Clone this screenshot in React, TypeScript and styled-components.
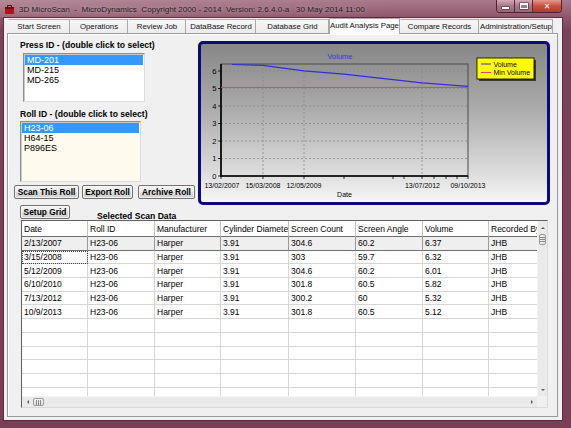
import React from "react";
import styled, { createGlobalStyle } from "styled-components";

const GlobalStyle = createGlobalStyle`
  html, body {
    margin: 0;
    padding: 0;
    width: 571px;
    height: 428px;
    overflow: hidden;
    background: #7c4258;
  }
  * { box-sizing: border-box; }
  body { font-family: "Liberation Sans", Arial, sans-serif; }
`;

const COLS = [66, 67, 66, 68, 67, 67, 66, 67];
const HEADERS = ["Date", "Roll ID", "Manufacturer", "Cylinder Diameter", "Screen Count", "Screen Angle", "Volume", "Recorded By"];
const ROWS = [
  ["2/13/2007", "H23-06", "Harper", "3.91", "304.6", "60.2", "6.37", "JHB"],
  ["3/15/2008", "H23-06", "Harper", "3.91", "303", "59.7", "6.32", "JHB"],
  ["5/12/2009", "H23-06", "Harper", "3.91", "304.6", "60.2", "6.01", "JHB"],
  ["6/10/2010", "H23-06", "Harper", "3.91", "301.8", "60.5", "5.82", "JHB"],
  ["7/13/2012", "H23-06", "Harper", "3.91", "300.2", "60", "5.32", "JHB"],
  ["10/9/2013", "H23-06", "Harper", "3.91", "301.8", "60.5", "5.12", "JHB"],
];
const TABS: [string, number][] = [
  ["Start Screen", 62],
  ["Operations", 58],
  ["Review Job", 58],
  ["DataBase Record", 70],
  ["Database Grid", 73],
  ["Audit Analysis Page", 71],
  ["Compare Records", 79],
  ["Administration/Setup", 74],
];

export default function App() {
  return (
    <>
      <GlobalStyle />
      <Window>
        <TitleBar>
          <AppIcon />
          <TitleText>
            {"3D MicroScan  -  MicroDynamics  Copyright 2000 - 2014  Version: 2.6.4.0-a   30 May 2014 11:00"}
          </TitleText>
          <Controls>
            <CtrlButton $w={17}>
              <MinGlyph />
            </CtrlButton>
            <CtrlButton $w={18}>
              <MaxGlyph />
            </CtrlButton>
            <CtrlButton $w={29} $close>
              ✕
            </CtrlButton>
          </Controls>
        </TitleBar>

        <Client>
          <TabStrip>
            {TABS.map(([name, w]) => (
              <Tab key={name} $w={w} $active={name === "Audit Analysis Page"}>
                {name}
              </Tab>
            ))}
          </TabStrip>

          <TabPage>
            <TopSection>
              <LeftCol>
                <GroupLabel>Press ID - (double click to select)</GroupLabel>
                <ListBox $w={122} $h={49} $ml={9} $mt={2}>
                  <ListItem $sel>MD-201</ListItem>
                  <ListItem>MD-215</ListItem>
                  <ListItem>MD-265</ListItem>
                </ListBox>
                <GroupLabel $mt={7}>Roll ID - (double click to select)</GroupLabel>
                <ListBox $w={121} $h={61} $ml={6} $mt={1} $bg="#fffaee">
                  <ListItem $sel>H23-06</ListItem>
                  <ListItem>H64-15</ListItem>
                  <ListItem>P896ES</ListItem>
                </ListBox>
                <ButtonRow>
                  <Button $w={65}>Scan This Roll</Button>
                  <Button $w={51}>Export Roll</Button>
                  <Button $w={57} $ml={2}>Archive Roll</Button>
                </ButtonRow>
              </LeftCol>

              <ChartPanel>
                <VolumeChart />
              </ChartPanel>
            </TopSection>

            <SetupRow>
              <Button $w={50} $ml={6}>Setup Grid</Button>
              <Caption>Selected Scan Data</Caption>
            </SetupRow>

            <Grid>
              <DataArea>
                <GridRow $h={16}>
                  {HEADERS.map((h) => (
                    <Cell key={h} $head>
                      {h}
                    </Cell>
                  ))}
                </GridRow>
                {ROWS.map((r, i) => (
                  <GridRow key={i} $h={13.7} $sel={i === 0}>
                    {r.map((c, j) => (
                      <Cell key={j} $sel={i === 0} $focus={i === 1 && j === 0}>
                        {c}
                      </Cell>
                    ))}
                  </GridRow>
                ))}
                {Array.from({ length: 6 }).map((_, i) => (
                  <GridRow key={"e" + i} $h={13.7}>
                    {COLS.map((_, j) => (
                      <Cell key={j} />
                    ))}
                  </GridRow>
                ))}
              </DataArea>

              <VScroll>
                <ScrollBtn>
                  <Arrow $dir="up" />
                </ScrollBtn>
                <VThumb>
                  <Grip $vertical />
                </VThumb>
                <Track />
                <ScrollBtn>
                  <Arrow $dir="down" />
                </ScrollBtn>
              </VScroll>

              <HScroll>
                <HScrollBtn>
                  <Arrow $dir="left" />
                </HScrollBtn>
                <HThumb>
                  <Grip />
                </HThumb>
                <Track />
                <HScrollBtn>
                  <Arrow $dir="right" />
                </HScrollBtn>
              </HScroll>
              <Corner />
            </Grid>
          </TabPage>
        </Client>
      </Window>
    </>
  );
}

/* ---------- chart ---------- */

const yOf = (v: number) => 132 - 17.5 * v;

function VolumeChart() {
  const blue = "31,20.5 62,21.4 103,26.8 143,30.1 221,38.9 267,42.4";
  return (
    <svg width="346" height="158" viewBox="0 0 346 158" fontFamily="Liberation Sans, Arial, sans-serif">
      <text x="139" y="15" fill="#3a3ad2" fontSize="7.5" textAnchor="middle">
        Volume
      </text>

      {[1, 2, 3, 4, 5, 6].map((v) => (
        <line key={v} x1="20" x2="267" y1={yOf(v)} y2={yOf(v)} stroke="#8c8c8c" strokeWidth="0.8" strokeDasharray="2 2" />
      ))}
      {[62, 103, 221].map((x) => (
        <line key={x} x1={x} x2={x} y1="20" y2="132" stroke="#8c8c8c" strokeWidth="0.8" strokeDasharray="2 2" />
      ))}

      <rect x="20" y="20" width="247" height="112" fill="none" stroke="#4b4b4b" strokeWidth="1" />
      <line x1="20" x2="20" y1="20" y2="132.5" stroke="#000" strokeWidth="1.6" />
      <line x1="19.5" x2="267" y1="132" y2="132" stroke="#000" strokeWidth="1.6" />

      {[0, 1, 2, 3, 4, 5, 6].map((v) => (
        <g key={v}>
          <line x1="17" x2="20" y1={yOf(v)} y2={yOf(v)} stroke="#000" strokeWidth="0.8" />
          <text x="15.5" y={yOf(v) + 2.6} fontSize="7.5" textAnchor="end" fill="#000">
            {v}
          </text>
        </g>
      ))}

      {[20, 62, 103, 143, 192, 203, 221, 233, 245, 256, 267].map((x) => (
        <line key={x} x1={x} x2={x} y1="132" y2="135" stroke="#000" strokeWidth="0.8" />
      ))}
      {[
        [21, "13/02/2007"],
        [62, "15/03/2008"],
        [103, "12/05/2009"],
        [221.5, "13/07/2012"],
        [267, "09/10/2013"],
      ].map(([x, t]) => (
        <text key={t as string} x={x as number} y="144" fontSize="7" textAnchor="middle" fill="#000">
          {t}
        </text>
      ))}
      <text x="143.5" y="153" fontSize="7" textAnchor="middle" fill="#000">
        Date
      </text>

      <line x1="20" x2="267" y1="43.4" y2="43.4" stroke="#e04848" strokeWidth="1" />
      <polyline points={blue} fill="none" stroke="#2f2fe0" strokeWidth="1.2" />

      <rect x="278" y="16" width="57" height="21" fill="#3a3a3a" />
      <rect x="276" y="14" width="57" height="21" fill="#ffff00" stroke="#000" strokeWidth="0.8" />
      <line x1="280" x2="290" y1="20" y2="20" stroke="#2f2fe0" strokeWidth="1" />
      <text x="292.5" y="22.6" fontSize="7" fill="#000">
        Volume
      </text>
      <line x1="280" x2="290" y1="28.5" y2="28.5" stroke="#e04848" strokeWidth="1" />
      <text x="292.5" y="31.2" fontSize="7" fill="#000">
        Min Volume
      </text>
    </svg>
  );
}

function AppIcon() {
  return (
    <svg width="11" height="11" viewBox="0 0 11 11">
      <rect x="1" y="3" width="9" height="7" rx="1" fill="#b3121d" />
      <rect x="1" y="3" width="9" height="2" fill="#7a0a12" />
      <path d="M3.5 3 V1.5 H7.5 V3" fill="none" stroke="#5a0a10" strokeWidth="1" />
    </svg>
  );
}

/* ---------- window frame ---------- */

const Window = styled.div`
  width: 571px;
  height: 428px;
  display: flex;
  flex-direction: column;
  background: linear-gradient(180deg, #a97a8b 0px, #8e5469 18px, #7c4258 30px, #7a3f56 100%);
`;

const TitleBar = styled.div`
  height: 18px;
  flex: none;
  display: flex;
  align-items: center;
  padding-left: 4px;
  background: linear-gradient(90deg, rgba(255, 255, 255, 0.12), rgba(255, 255, 255, 0) 70%);
`;

const TitleText = styled.div`
  margin-left: 4px;
  font-family: "Liberation Sans", Arial, sans-serif;
  font-size: 8.1px;
  color: #1e1e1e;
  white-space: pre;
  text-shadow: 0 0 4px rgba(255, 230, 240, 0.6);
`;

const Controls = styled.div`
  margin-left: auto;
  margin-right: 9px;
  align-self: flex-start;
  display: flex;
  border: 1px solid #4e2232;
  border-top: none;
  border-radius: 0 0 4px 4px;
  overflow: hidden;
`;

const CtrlButton = styled.div<{ $w: number; $close?: boolean }>`
  width: ${(p) => p.$w}px;
  height: 12px;
  display: flex;
  align-items: center;
  justify-content: center;
  font-family: "DejaVu Sans", sans-serif;
  font-size: 8px;
  font-weight: bold;
  color: #fff;
  border-left: ${(p) => (p.$w === 17 ? "none" : "1px solid #5a2a3c")};
  background: ${(p) =>
    p.$close
      ? "linear-gradient(180deg, #e59a8e 0%, #c9503f 50%, #b43a2c 100%)"
      : "linear-gradient(180deg, #d2aab8 0%, #a97788 50%, #9a6578 100%)"};
`;

const MinGlyph = styled.div`
  width: 7px;
  height: 2px;
  margin-top: 4px;
  background: #fff;
  box-shadow: 0 0 0 0.5px #3c1a28;
`;

const MaxGlyph = styled.div`
  width: 8px;
  height: 6px;
  border: 1px solid #fff;
  border-top-width: 2px;
  box-shadow: 0 0 0 0.5px #3c1a28;
`;

const Client = styled.div`
  flex: 1;
  margin: 0 9px 8px 4px;
  padding: 0 4px 3px 3px;
  background: #f0f0f0;
  display: flex;
  flex-direction: column;
  box-shadow: 0 0 0 1px #5e2a3f;
`;

const TabStrip = styled.div`
  height: 15px;
  flex: none;
  display: flex;
  align-items: flex-end;
  padding-left: 1px;
  position: relative;
  z-index: 1;
`;

const Tab = styled.div<{ $w: number; $active?: boolean }>`
  width: ${(p) => p.$w}px;
  height: ${(p) => (p.$active ? 16 : 14)}px;
  margin-bottom: ${(p) => (p.$active ? -1 : 0)}px;
  display: flex;
  align-items: center;
  justify-content: center;
  font-family: "Liberation Sans", Arial, sans-serif;
  font-size: 7.8px;
  color: #111;
  white-space: nowrap;
  border: 1px solid #a9a9a9;
  border-bottom: none;
  border-left-color: ${(p) => (p.$active ? "#a9a9a9" : "transparent")};
  background: ${(p) => (p.$active ? "#fbfbfb" : "linear-gradient(180deg, #f6f6f6, #ececec)")};
  padding-bottom: ${(p) => (p.$active ? 2 : 0)}px;
`;

const TabPage = styled.div`
  flex: 1;
  display: flex;
  flex-direction: column;
  border: 1px solid #9a9a9a;
  box-shadow: inset 1px 1px 0 #ffffff;
  background: #f0f0f0;
  padding: 6px 7px 8px 6px;
`;

/* ---------- top section ---------- */

const TopSection = styled.div`
  height: 165px;
  flex: none;
  display: flex;
`;

const LeftCol = styled.div`
  width: 184px;
  display: flex;
  flex-direction: column;
`;

const GroupLabel = styled.div<{ $mt?: number }>`
  margin-top: ${(p) => p.$mt ?? 0}px;
  margin-left: 6px;
  height: 11px;
  line-height: 11px;
  font-family: "Liberation Sans", Arial, sans-serif;
  font-weight: bold;
  font-size: 8.6px;
  color: #000;
  white-space: nowrap;
`;

const ListBox = styled.div<{ $w: number; $h: number; $ml: number; $mt: number; $bg?: string }>`
  width: ${(p) => p.$w}px;
  height: ${(p) => p.$h}px;
  margin-left: ${(p) => p.$ml}px;
  margin-top: ${(p) => p.$mt}px;
  background: ${(p) => p.$bg ?? "#ffffff"};
  border: 1px solid #8e8f8f;
  border-right-color: #dcdcdc;
  border-bottom-color: #dcdcdc;
  box-shadow: inset 1px 1px 0 #c8c8c8;
  padding: 1px;
`;

const ListItem = styled.div<{ $sel?: boolean }>`
  height: 10px;
  line-height: 10px;
  padding-left: 2px;
  font-family: "Liberation Sans", Arial, sans-serif;
  font-size: 9px;
  color: ${(p) => (p.$sel ? "#ffffff" : "#000000")};
  background: ${(p) => (p.$sel ? "#3399ff" : "transparent")};
`;

const ButtonRow = styled.div`
  margin-top: 3px;
  display: flex;
  gap: 3px;
`;

const Button = styled.div<{ $w: number; $ml?: number }>`
  width: ${(p) => p.$w}px;
  height: 14px;
  margin-left: ${(p) => p.$ml ?? 0}px;
  flex: none;
  display: flex;
  align-items: center;
  justify-content: center;
  font-family: "Liberation Sans", Arial, sans-serif;
  font-weight: bold;
  font-size: 8.4px;
  color: #000;
  white-space: nowrap;
  border: 1px solid #707070;
  border-radius: 2px;
  background: linear-gradient(180deg, #f2f2f2 0%, #ebebeb 50%, #dddddd 51%, #cfcfcf 100%);
  box-shadow: inset 0 0 0 1px rgba(255, 255, 255, 0.7);
`;

const ChartPanel = styled.div`
  width: 352px;
  height: 164px;
  margin-top: 1px;
  border: 3px solid #0a0a7e;
  border-radius: 5px;
  background: linear-gradient(180deg, #878787 0%, #aaaaaa 40%, #d8d8d8 78%, #f6f6f6 100%);
  box-shadow: inset 0 -1px 0 #ffffff;
  overflow: hidden;

  svg {
    display: block;
  }
`;

/* ---------- grid ---------- */

const SetupRow = styled.div`
  height: 14px;
  flex: none;
  display: flex;
  align-items: flex-end;
`;

const Caption = styled.div`
  margin-left: 27px;
  margin-bottom: -2px;
  line-height: 10px;
  font-family: "Liberation Sans", Arial, sans-serif;
  font-weight: bold;
  font-size: 8.6px;
  color: #000;
`;

const Grid = styled.div`
  width: 527px;
  height: 188px;
  margin: 1px 0 0 7px;
  flex: none;
  display: grid;
  grid-template-columns: 515px 10px;
  grid-template-rows: 175px 11px;
  border: 1px solid;
  border-color: #5f5f5f #dadada #dadada #5f5f5f;
  background: #ffffff;
`;

const DataArea = styled.div`
  overflow: hidden;
  background: #ffffff;
`;

const GridRow = styled.div<{ $h: number; $sel?: boolean }>`
  height: ${(p) => p.$h}px;
  display: grid;
  grid-template-columns: ${COLS.map((c) => c + "px").join(" ")};
  background: ${(p) => (p.$sel ? "#efefef" : "transparent")};
`;

const Cell = styled.div<{ $head?: boolean; $sel?: boolean; $focus?: boolean }>`
  overflow: hidden;
  white-space: nowrap;
  padding: 0 2px;
  display: flex;
  align-items: center;
  font-family: "Liberation Sans", Arial, sans-serif;
  font-size: 8.5px;
  color: #000;
  border-right: 1px solid ${(p) => (p.$head ? "#c4c4c4" : p.$sel ? "#9a9a9a" : "#d6d6d6")};
  border-bottom: 1px solid ${(p) => (p.$head || p.$sel ? "#6f6f6f" : "#d6d6d6")};
  outline: ${(p) => (p.$focus ? "1px dotted #444" : "none")};
  outline-offset: -1px;
`;

const VScroll = styled.div`
  display: flex;
  flex-direction: column;
  background: #eaeaea;
  border-left: 1px solid #f4f4f4;
`;

const HScroll = styled.div`
  display: flex;
  background: #eaeaea;
  border-top: 1px solid #f4f4f4;
`;

const Corner = styled.div`
  background: #f0f0f0;
`;

const ScrollBtn = styled.div`
  height: 13px;
  flex: none;
  display: flex;
  align-items: center;
  justify-content: center;
`;

const HScrollBtn = styled.div`
  width: 11px;
  flex: none;
  display: flex;
  align-items: center;
  justify-content: center;
`;

const Track = styled.div`
  flex: 1;
`;

const VThumb = styled.div`
  height: 11px;
  margin: 0 1px;
  flex: none;
  display: flex;
  align-items: center;
  justify-content: center;
  border: 1px solid #9c9c9c;
  border-radius: 2px;
  background: linear-gradient(90deg, #f6f6f6, #dedede);
`;

const HThumb = styled.div`
  width: 11px;
  margin: 1px 0;
  flex: none;
  display: flex;
  align-items: center;
  justify-content: center;
  border: 1px solid #9c9c9c;
  border-radius: 2px;
  background: linear-gradient(180deg, #f6f6f6, #dedede);
`;

const Grip = styled.div<{ $vertical?: boolean }>`
  width: 5px;
  height: 5px;
  background: ${(p) =>
    p.$vertical
      ? "repeating-linear-gradient(180deg, #8a8a8a 0 1px, transparent 1px 2px)"
      : "repeating-linear-gradient(90deg, #8a8a8a 0 1px, transparent 1px 2px)"};
`;

const Arrow = styled.div<{ $dir: "up" | "down" | "left" | "right" }>`
  width: 0;
  height: 0;
  border: 2.5px solid transparent;
  ${(p) =>
    p.$dir === "up"
      ? "border-bottom-color: #5a5a5a; border-top-width: 0;"
      : p.$dir === "down"
      ? "border-top-color: #5a5a5a; border-bottom-width: 0;"
      : p.$dir === "left"
      ? "border-right-color: #5a5a5a; border-left-width: 0;"
      : "border-left-color: #5a5a5a; border-right-width: 0;"}
`;
